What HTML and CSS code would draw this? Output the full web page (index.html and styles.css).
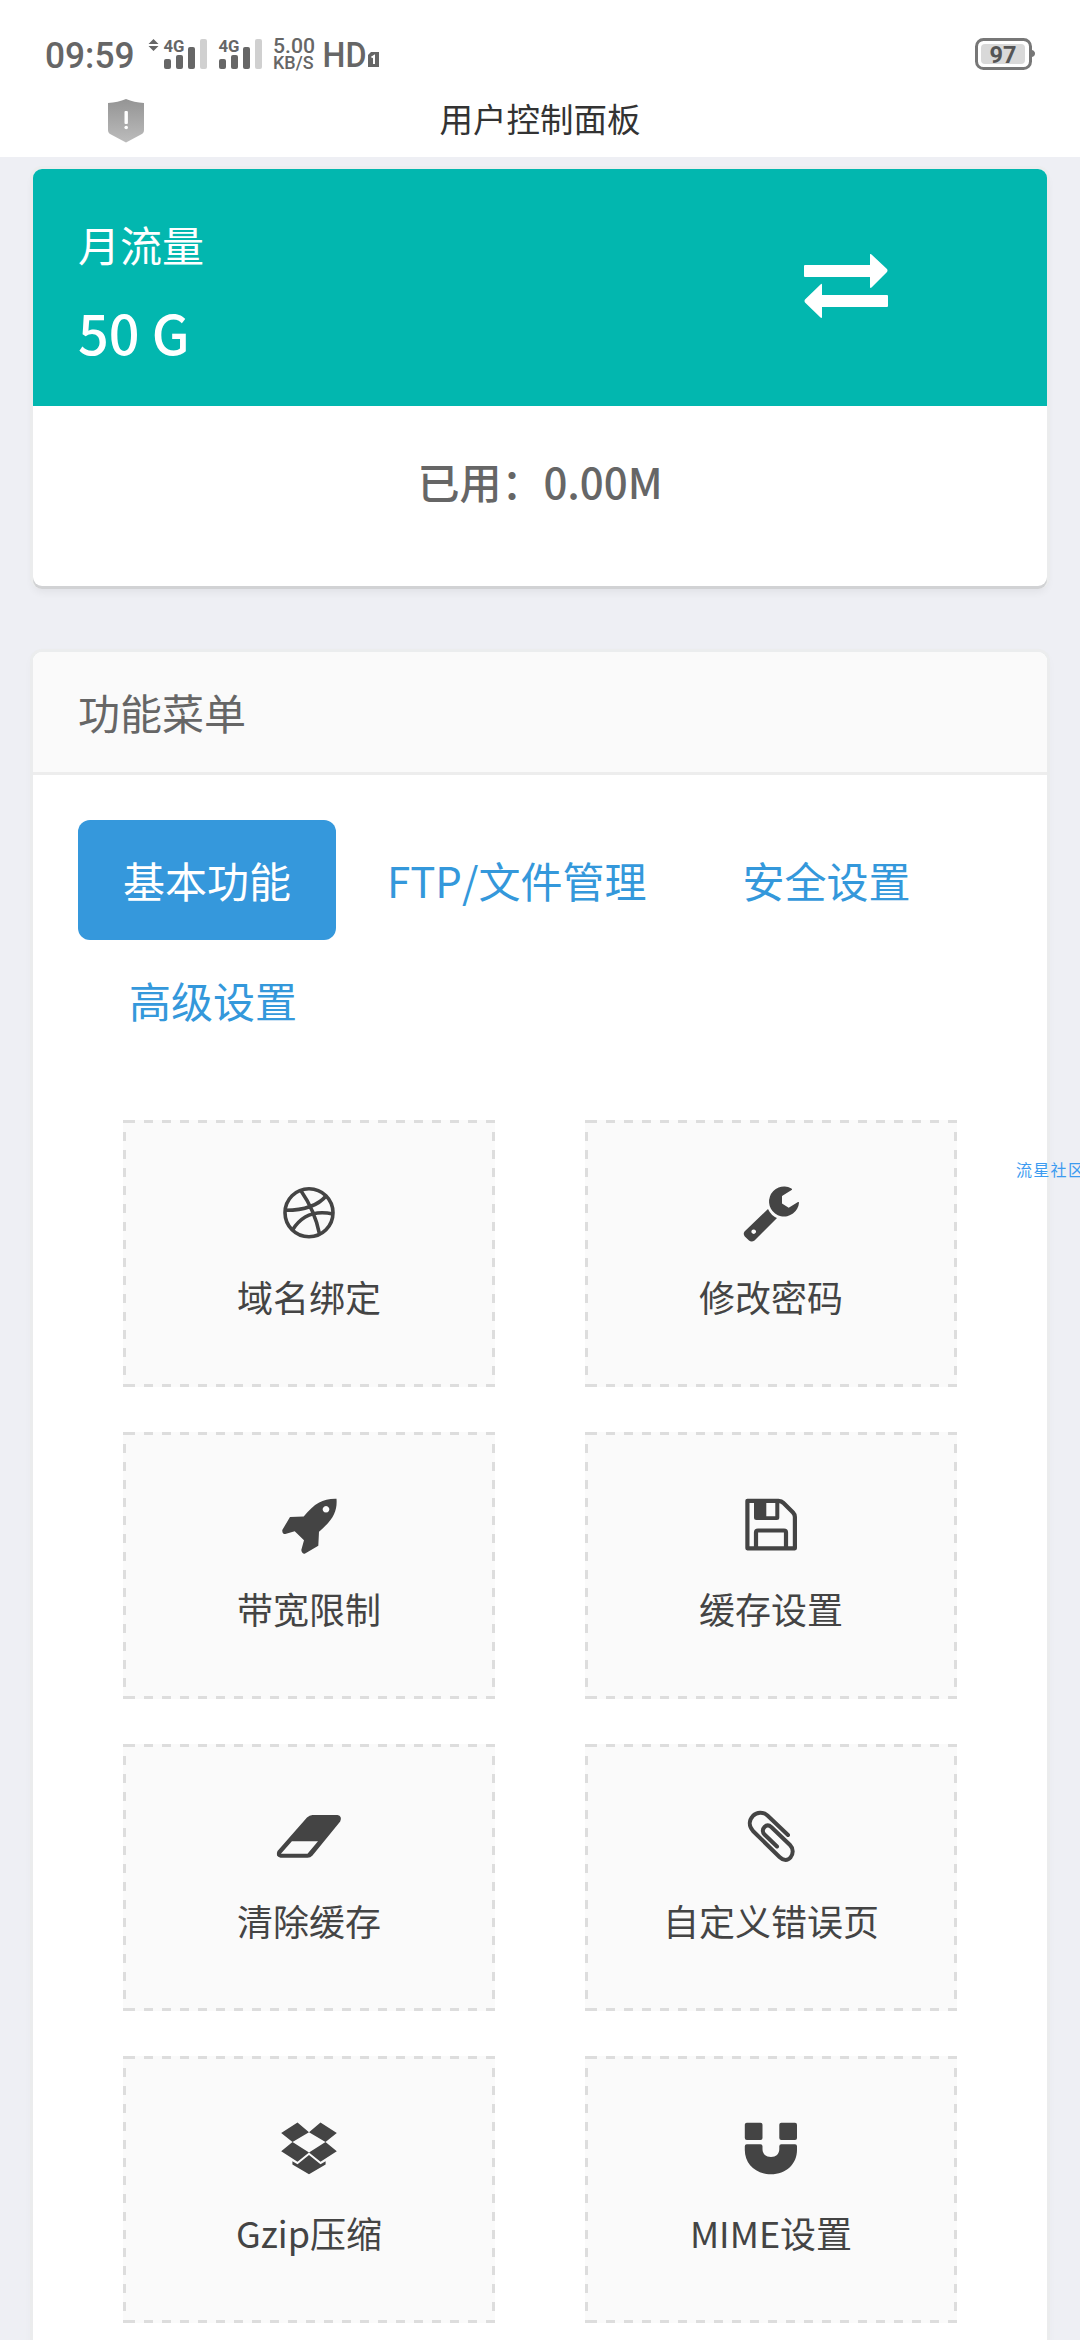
FILE: index.html
```html
<!DOCTYPE html>
<html lang="zh-CN">
<head>
<meta charset="utf-8">
<title>用户控制面板</title>
<link rel="stylesheet" href="styles.css">
</head>
<body>
<header class="topbar">
  <div class="status">
    <svg class="status-left" width="360" height="50" viewBox="40 30 360 50">
      <g class="status-text">
        <text x="45" y="67.600" font-size="37" font-weight="500" textLength="89.500" lengthAdjust="spacingAndGlyphs">09:59</text>
        <text x="163.500" y="51.500" font-size="17" font-weight="700" textLength="21" lengthAdjust="spacingAndGlyphs">4G</text>
        <text x="218.500" y="51.500" font-size="17" font-weight="700" textLength="21" lengthAdjust="spacingAndGlyphs">4G</text>
        <text x="273" y="52.700" font-size="20" font-weight="500" textLength="42" lengthAdjust="spacingAndGlyphs">5.00</text>
        <text x="273" y="69" font-size="17.500" font-weight="500" textLength="40.500" lengthAdjust="spacingAndGlyphs">KB/S</text>
        <text x="322.500" y="67" font-size="35.500" font-weight="500" textLength="44" lengthAdjust="spacingAndGlyphs">HD</text>
      </g>
      <g fill="#666">
        <path d="M153.500 39l5 5h-10zM153.500 51l5-5h-10z"/>
        <rect x="164" y="59" width="7" height="10" rx="2"/><rect x="176" y="55" width="7" height="14" rx="2"/><rect x="188" y="47" width="7" height="22" rx="2"/>
        <rect x="219" y="59" width="7" height="10" rx="2"/><rect x="231" y="55" width="7" height="14" rx="2"/><rect x="243" y="47" width="7" height="22" rx="2"/>
        <path d="M371 52h8v15h-11v-12z"/>
      </g>
      <g fill="#d0d0d0"><rect x="200" y="39" width="7" height="30" rx="2"/><rect x="255" y="39" width="7" height="30" rx="2"/></g>
      <path d="M371.500 57.500l2.500-1.500v8" fill="none" stroke="#fff" stroke-width="2"/>
    </svg>
    <svg class="battery" width="64" height="36" viewBox="973 36 64 36">
      <rect x="976.500" y="39.500" width="54" height="29" rx="7" fill="#fff" stroke="#777" stroke-width="3"/>
      <path d="M1032 50q3 1 3 3.500t-3 3.500z" fill="#777"/>
      <rect x="981" y="44" width="44" height="20" rx="4" fill="#d9d9d9"/>
      <text class="battery-level" x="1003" y="62.500" font-size="23.500" text-anchor="middle">97</text>
    </svg>
  </div>
  <div class="titlebar">
    <svg class="shield" width="36" height="44" viewBox="0 0 36 44">
      <defs><linearGradient id="shade" x1="0" y1="0" x2="0" y2="1"><stop offset="0" stop-color="#949494"/><stop offset="1" stop-color="#bcbcbc"/></linearGradient></defs>
      <path d="M18 0Q26 3.500 36 4V31q0 3-3 4.500L18 43.500 3 35.500Q0 34 0 31V4Q10 3.500 18 0z" fill="url(#shade)"/>
      <rect x="16.500" y="12" width="3.400" height="13" rx="1" fill="#fff"/><circle cx="18.200" cy="28.500" r="1.800" fill="#fff"/>
    </svg>
    <h1>用户控制面板</h1>
  </div>
</header>

<main>
  <section class="card traffic">
    <div class="traffic-head">
      <div>
        <div class="traffic-label">月流量</div>
        <div class="traffic-value">50 G</div>
      </div>
      <svg class="exchange" width="84" height="64" viewBox="0 0 84 64" fill="#fff">
        <path d="M1 11H66V1q0-2 1.500-.5L83 15q1 1.500 0 3L67.500 33.500Q66 34.500 66 33V23H1q-1 0-1-1V12q0-1 1-1z"/>
        <path d="M83 41H18V31q0-2-1.500-.5L1 45.500q-1 1.500 0 3L16.500 63.500Q18 64.500 18 63V53H83q1 0 1-1V42q0-1-1-1z"/>
      </svg>
    </div>
    <div class="traffic-used">已用：0.00M</div>
  </section>

  <section class="card menu">
    <h2>功能菜单</h2>
    <div class="menu-body">
      <nav class="tabs">
        <a class="tab active">基本功能</a>
        <a class="tab">FTP/文件管理</a>
        <a class="tab">安全设置</a>
        <a class="tab">高级设置</a>
      </nav>
      <div class="tiles">
        <a class="tile">
          <svg viewBox="0 0 72 72" fill="none" stroke="#444" stroke-width="3.600"><circle cx="36" cy="35.700" r="24"/><path d="M27.800 13.500Q42 34 46.500 57M12 33.300Q41 33.500 53.500 18.500M19.500 53Q33 31 60 37"/></svg>
          <span>域名绑定</span>
        </a>
        <a class="tile">
          <svg viewBox="0 0 72 72" fill="#444"><path d="M57 12.700L47 19V26.500L53.700 30.700 63 25q1-.3 1 .7A15 15 0 1 1 56 11.200q1.500.7 1 1.500z"/><path fill-rule="evenodd" d="M33 32Q36 38.500 42 41L19.500 63.500Q16.500 65.500 14 63.500L9.800 59.500Q7.800 57 9.500 54.500zM18.700 52.400a2.300 2.300 0 1 0 .01 0z"/></svg>
          <span>修改密码</span>
        </a>
        <a class="tile">
          <svg viewBox="0 0 72 72" fill="#444"><path fill-rule="evenodd" d="M63.500 9.800C50 9.500 42 14 30.700 27.500L17 28 9.300 41Q9 45 12.300 45L21.700 42.300 31 51.300 28.300 61Q29 65 31.700 64.700L45.300 56.700 46 42.700C60 31 64.500 22 63.500 9.800zM53 17a3.300 3.300 0 1 0 .01 0z"/></svg>
          <span>带宽限制</span>
        </a>
        <a class="tile">
          <svg viewBox="0 0 72 72" fill="none" stroke="#444" stroke-width="4.200" stroke-linejoin="round"><path d="M12.400 11.800H43.500Q46.500 11.800 48.500 14L58 23.500Q59.900 25.500 59.900 28V59.300H12.400z"/><path fill="#444" stroke="none" fill-rule="evenodd" d="M19 12H44.300V28.500q0 2.500-2.500 2.500H21.500q-2.500 0-2.500-2.500zM31.300 14V27.300H40.300V14z"/><path d="M21 59V43.500q0-2 2-2H49q2 0 2 2V59"/></svg>
          <span>缓存设置</span>
        </a>
        <a class="tile">
          <svg viewBox="0 0 72 72" fill="#444"><path fill-rule="evenodd" d="M39.500 14H64.500Q69.500 15 67.200 20.500L39.500 54.500Q37.500 56.700 34.500 56.700H7.500Q2 55.500 4.500 50L34 16.500Q36.500 14 39.500 14zM18.900 40.200L7.900 52.700H34.500L45 40.200z"/></svg>
          <span>清除缓存</span>
        </a>
        <a class="tile">
          <svg viewBox="0 0 72 72" fill="none" stroke="#444" stroke-width="4" stroke-linecap="round"><path d="M53 34L32.500 14.500C28 10.500 22 11 18 14.800C14 19 13.500 25 18 30L44.500 56C48.500 60 53 59.500 55.500 56.500C58.500 53 58.500 47.500 55 44L36.500 26.200C34 24 31.500 24 29.500 26C27 28.500 27.500 31.500 29.500 33.500L42 45.500"/></svg>
          <span>自定义错误页</span>
        </a>
        <a class="tile">
          <svg viewBox="0 0 72 72" fill="#444"><path d="M24.500 9.500L8.200 20 19.500 29 36 19.300zM47.500 9.500L63.800 20 52.500 29 36 19.300zM19.500 29L8.200 38.300 24.500 48.800 36 39.500zM52.500 29L63.800 38.300 47.500 48.800 36 39.500zM36 42L47.500 51.200 52.600 48.300V51.400L36 61.200 19.400 51.400V48.300L24.500 51.200z"/></svg>
          <span>Gzip压缩</span>
        </a>
        <a class="tile">
          <svg viewBox="0 0 72 72" fill="#444"><rect x="9.800" y="9.800" width="17.700" height="17.200" rx="2"/><rect x="44.300" y="9.800" width="17.700" height="17.200" rx="2"/><path d="M11.800 31.200H25.500q2 0 2 2V36C27.500 41 31 44 36 44S44.300 41 44.300 36V33.200q0-2 2-2H60q2 0 2 2V37C62 51 51 61.300 36 61.300S9.800 51 9.800 37V33.200q0-2 2-2z"/></svg>
          <span>MIME设置</span>
        </a>
      </div>
    </div>
  </section>
</main>
<div class="floating-tag">流星社区</div>
</body>
</html>
```
FILE: styles.css
```css
* { box-sizing: border-box; }

body {
  margin: 0;
  height: 2340px;
  overflow: hidden;
  position: relative;
  background: #eeeff4;
  color: #666;
  font-family: "Noto Sans CJK SC", sans-serif;
  font-kerning: none;
}

svg { display: block; flex: none; }

.topbar {
  height: 157px;
  background: #fff;
}

.status {
  display: flex;
  justify-content: space-between;
  padding: 30px 43px 0 40px;
  height: 90px;
}

.battery { margin-top: 6px; }

.status-text {
  fill: #666;
  font-family: Roboto, sans-serif;
}

.battery-level {
  fill: #555;
  font-family: Roboto, sans-serif;
  font-weight: 700;
}

.titlebar {
  display: grid;
  grid-template-columns: 1fr auto 1fr;
  align-items: start;
  height: 67px;
}

.shield { margin: 9px 0 0 108px; }

h1 {
  margin: 0;
  font-size: 33.5px;
  font-weight: 400;
  line-height: 55px;
  color: #333;
}

main {
  display: flex;
  flex-direction: column;
  gap: 66px;
  padding: 12px 33px 0;
}

.card {
  border-radius: 9px;
  background: #fff;
  box-shadow: 0 0 0 3px rgba(235, 236, 236, .8), 0 3px 12px rgba(0, 0, 0, .04);
}

.traffic {
  height: 417px;
  box-shadow: 0 3px 0 #d1d2d4, 0 0 0 3px rgba(235, 236, 236, .8), 0 6px 9px rgba(0, 0, 0, .06);
}

.traffic-head {
  display: flex;
  justify-content: space-between;
  height: 237px;
  padding: 45px 159px 0 45px;
  border-radius: 9px 9px 0 0;
  background: #02b7af;
  color: #fff;
}

.traffic-label {
  font-size: 42px;
  line-height: 60px;
}

.traffic-value {
  margin-top: 15px;
  font-size: 54px;
  font-weight: 500;
  line-height: 86px;
}

.exchange { margin-top: 40px; }

.traffic-used {
  padding-top: 45px;
  font-size: 42px;
  font-weight: 500;
  line-height: 60px;
  text-align: center;
}

.menu { height: 1800px; }

h2 {
  margin: 0;
  height: 123px;
  padding: 0 45px;
  border-bottom: 3px solid #ededed;
  border-radius: 9px 9px 0 0;
  background: #fafafa;
  font-size: 42px;
  font-weight: 400;
  line-height: 120px;
}

.menu-body { padding: 45px 45px 0; }

.tabs {
  display: flex;
  flex-wrap: wrap;
}

.tab {
  height: 120px;
  margin-left: 6px;
  padding: 0 45px;
  border-radius: 12px;
  color: #3498db;
  font-size: 42px;
  line-height: 120px;
}

.tab.active {
  margin-left: 0;
  background: #3598dc;
  color: #fff;
}

.tiles {
  display: grid;
  grid-template-columns: repeat(2, 372px);
  gap: 45px 90px;
  padding: 60px 45px 0;
}

.tile {
  --across: repeating-linear-gradient(90deg, transparent 0 3px, #ddd 3px 12px, transparent 12px 18px);
  --down: repeating-linear-gradient(#ddd 0 9px, transparent 9px 18px);
  --corner: linear-gradient(#ddd, #ddd);
  display: flex;
  flex-direction: column;
  align-items: center;
  height: 267px;
  padding-top: 57px;
  background:
    var(--corner) 0 0 / 3px 3px no-repeat,
    var(--corner) 0 100% / 3px 3px no-repeat,
    var(--across) 0 0 / 100% 3px no-repeat,
    var(--across) 0 100% / 100% 3px no-repeat,
    var(--down) 0 12px / 3px 243px no-repeat,
    var(--down) 100% 12px / 3px 243px no-repeat,
    #fafafa;
  color: #444;
}

.tile svg {
  width: 72px;
  height: 72px;
  margin-bottom: 20px;
}

.tile span {
  font-size: 36px;
  line-height: 54px;
}

.floating-tag {
  position: absolute;
  left: 1016px;
  top: 1157px;
  width: 64px;
  overflow: hidden;
  color: #3c9bf0;
  font-size: 16px;
  letter-spacing: 1.3px;
  line-height: 24px;
  white-space: nowrap;
}
```
